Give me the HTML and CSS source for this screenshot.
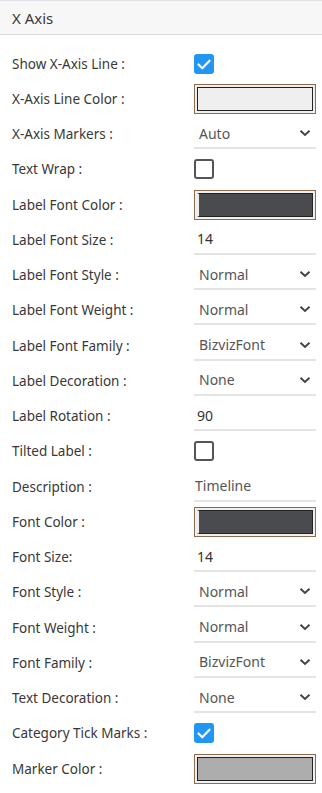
FILE: index.html
```html
<!DOCTYPE html>
<html lang="en">
<head>
  <meta charset="UTF-8" />
  <meta name="viewport" content="width=device-width, initial-scale=1.0"/>
  <title>X Axis</title>
  <link rel="stylesheet" href="styles.css">
</head>
<body>
  <div class="panel">
    <div class="panel-head">X Axis</div>

    <div class="form">
      <div class="row">
        <span class="label">Show X-Axis Line :</span>
        <span class="check on"><svg viewBox="0 0 20 20"><path d="M4.5 10.5l3.8 3.8 7.2-7.6"/></svg></span>
      </div>
      <div class="row">
        <span class="label">X-Axis Line Color :</span>
        <span class="swatch"><span class="fill light"></span></span>
      </div>
      <div class="row">
        <span class="label">X-Axis Markers :</span>
        <span class="select">Auto<svg viewBox="0 0 12 8"><path d="M1.5 1.8l4.5 4.2 4.5-4.2"/></svg></span>
      </div>
      <div class="row">
        <span class="label">Text Wrap :</span>
        <span class="check"></span>
      </div>
      <div class="row">
        <span class="label">Label Font Color :</span>
        <span class="swatch"><span class="fill dark"></span></span>
      </div>
      <div class="row">
        <span class="label">Label Font Size :</span>
        <span class="field num">14</span>
      </div>
      <div class="row">
        <span class="label">Label Font Style :</span>
        <span class="select">Normal<svg viewBox="0 0 12 8"><path d="M1.5 1.8l4.5 4.2 4.5-4.2"/></svg></span>
      </div>
      <div class="row">
        <span class="label">Label Font Weight :</span>
        <span class="select">Normal<svg viewBox="0 0 12 8"><path d="M1.5 1.8l4.5 4.2 4.5-4.2"/></svg></span>
      </div>
      <div class="row">
        <span class="label">Label Font Family :</span>
        <span class="select">BizvizFont<svg viewBox="0 0 12 8"><path d="M1.5 1.8l4.5 4.2 4.5-4.2"/></svg></span>
      </div>
      <div class="row">
        <span class="label">Label Decoration :</span>
        <span class="select">None<svg viewBox="0 0 12 8"><path d="M1.5 1.8l4.5 4.2 4.5-4.2"/></svg></span>
      </div>
      <div class="row">
        <span class="label">Label Rotation :</span>
        <span class="field num">90</span>
      </div>
      <div class="row">
        <span class="label">Tilted Label :</span>
        <span class="check"></span>
      </div>
      <div class="row">
        <span class="label">Description :</span>
        <span class="field">Timeline</span>
      </div>
      <div class="row">
        <span class="label">Font Color :</span>
        <span class="swatch"><span class="fill dark"></span></span>
      </div>
      <div class="row">
        <span class="label">Font Size:</span>
        <span class="field num">14</span>
      </div>
      <div class="row">
        <span class="label">Font Style :</span>
        <span class="select">Normal<svg viewBox="0 0 12 8"><path d="M1.5 1.8l4.5 4.2 4.5-4.2"/></svg></span>
      </div>
      <div class="row">
        <span class="label">Font Weight :</span>
        <span class="select">Normal<svg viewBox="0 0 12 8"><path d="M1.5 1.8l4.5 4.2 4.5-4.2"/></svg></span>
      </div>
      <div class="row">
        <span class="label">Font Family :</span>
        <span class="select">BizvizFont<svg viewBox="0 0 12 8"><path d="M1.5 1.8l4.5 4.2 4.5-4.2"/></svg></span>
      </div>
      <div class="row">
        <span class="label">Text Decoration :</span>
        <span class="select">None<svg viewBox="0 0 12 8"><path d="M1.5 1.8l4.5 4.2 4.5-4.2"/></svg></span>
      </div>
      <div class="row">
        <span class="label">Category Tick Marks :</span>
        <span class="check on"><svg viewBox="0 0 20 20"><path d="M4.5 10.5l3.8 3.8 7.2-7.6"/></svg></span>
      </div>
      <div class="row">
        <span class="label">Marker Color :</span>
        <span class="swatch"><span class="fill grey"></span></span>
      </div>
    </div>
  </div>
</body>
</html>
```

FILE: styles.css
```css
body {
  margin: 0;
  padding: 0;
  background: #fff;
  font-family: "Noto Sans", Arial, sans-serif;
  color: #333;
}

.panel {
  width: 322px;
}

.panel-head {
  height: 33px;
  padding-left: 12px;
  display: flex;
  align-items: center;
  font-size: 15px;
  color: #3a3a3a;
  background: #f7f7f7;
  border-top: 1px solid #dfe3e7;
  border-bottom: 1px solid #dcdcdc;
}

.form {
  padding-top: 11px;
  display: flex;
  flex-direction: column;
}

.row {
  height: 35.25px;
  display: flex;
  align-items: center;
  padding-left: 12px;
}

.label {
  width: 182px;
  font-size: 13.5px;
  color: #383838;
}

/* checkboxes */
.check {
  width: 20px;
  height: 20px;
  box-sizing: border-box;
  border: 2px solid #555;
  border-radius: 3px;
}

.check.on {
  border: none;
  background: #2196f3;
}

.check svg {
  width: 20px;
  height: 20px;
  display: block;
}

.check svg path {
  fill: none;
  stroke: #fff;
  stroke-width: 2.2;
  stroke-linecap: round;
  stroke-linejoin: round;
}

/* colour pickers */
.swatch {
  width: 122px;
  height: 30px;
  box-sizing: border-box;
  border: 1px solid #8d6b4f;
  background: #f0efee;
  padding: 2px;
}

.fill {
  display: block;
  height: 100%;
  box-sizing: border-box;
  border: 1px solid #222;
}

.fill.light { background: #eeefee; }
.fill.dark { background: #4a4b4f; border-left: 2px solid #eee; }
.fill.grey { background: #adadad; }

/* selects and text fields */
.select,
.field {
  width: 122px;
  height: 30px;
  box-sizing: border-box;
  border-bottom: 2px solid #e4e4e4;
  display: flex;
  align-items: center;
  font-size: 14px;
  color: #555;
}

.select {
  padding: 0 5px;
  justify-content: space-between;
}

.select svg {
  width: 12px;
  height: 8px;
}

.select svg path {
  fill: none;
  stroke: #444;
  stroke-width: 2;
}

.field {
  padding-left: 1px;
}

.field.num {
  padding-left: 3px;
  color: #333;
}
```
